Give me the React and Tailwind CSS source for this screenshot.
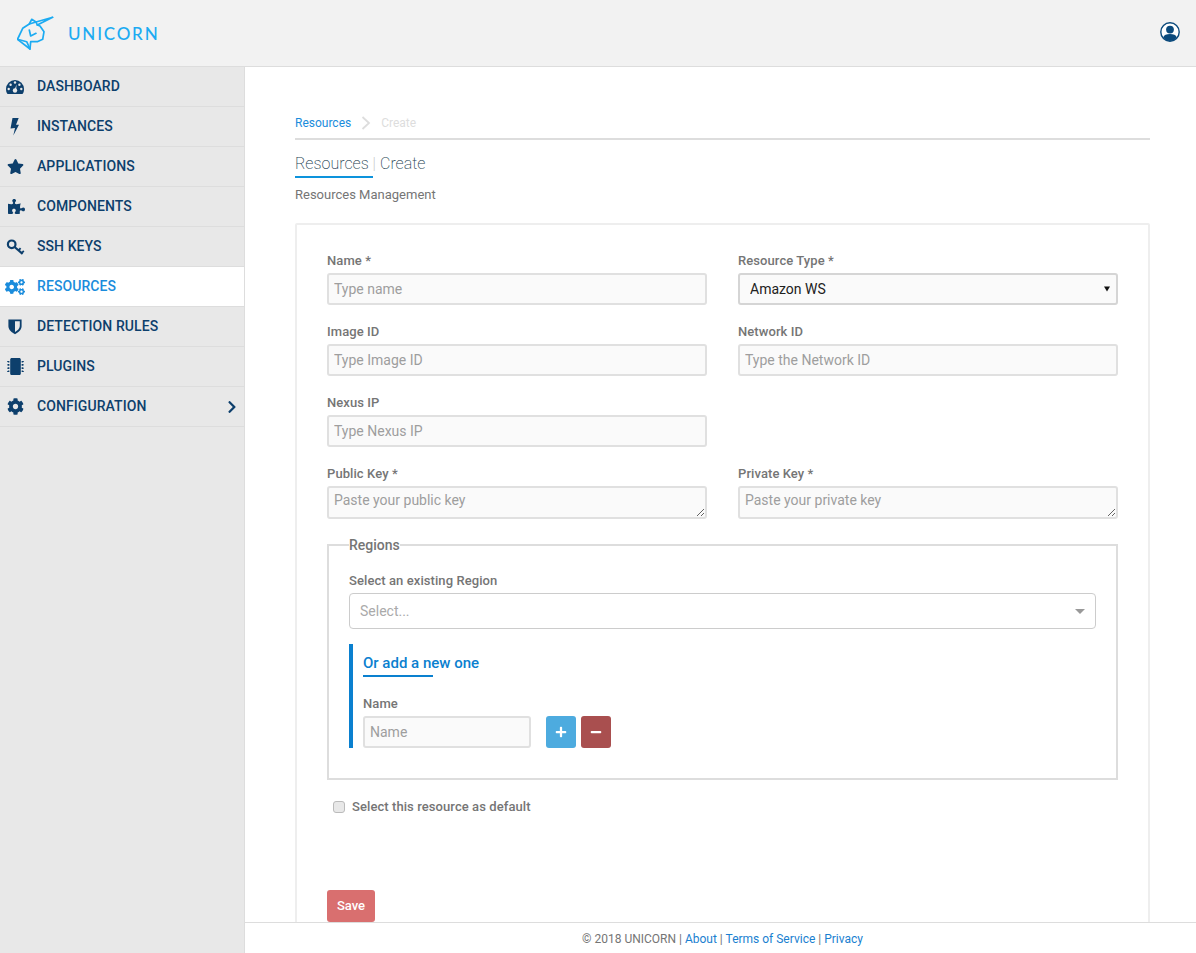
import React from "react";
import { FaStar, FaPuzzlePiece, FaCogs, FaMicrochip, FaCog, FaChevronRight, FaPlus, FaMinus } from "react-icons/fa";

const IconBox = ({ children }) => (
  <svg width="20" height="20" viewBox="0 0 20 20" fill="currentColor">{children}</svg>
);

const Dash = () => (
  <IconBox>
    <path d="M1 12 A9 9 0 0 1 19 12 C19 14 18.5 16 17.5 17 H2.5 C1.5 16 1 14 1 12Z" />
    <g fill="#e8e8e8">
      <circle cx="3.7" cy="12" r="1.2" />
      <circle cx="5.6" cy="7.8" r="1.2" />
      <circle cx="10" cy="5.5" r="1.2" />
      <circle cx="14.4" cy="7.8" r="1.2" />
      <circle cx="16.3" cy="12" r="1.2" />
      <circle cx="10" cy="13.5" r="2.2" />
    </g>
    <path d="M9.4 13 L11.6 7.6 L11 13.8Z" fill="#e8e8e8" />
  </IconBox>
);
const Bolt = () => (
  <IconBox><path d="M7.5 1 H13.7 L11 7.8 H14 L8.3 18.5 L10 11 L5.5 11.6Z" /></IconBox>
);
const Key = () => (
  <IconBox>
    <g fill="none" stroke="currentColor" strokeWidth="2.2">
      <circle cx="6.7" cy="7.3" r="3.8" />
      <path d="M9.6 10 L17.6 16.8" />
      <path d="M13.6 13.4 L15.6 11.2 M16.8 16 L18.8 13.8" strokeWidth="1.8" />
    </g>
  </IconBox>
);
const Shield = () => (
  <IconBox>
    <path d="M3.4 2.4 H16.6 V9 C16.6 13 13 15.6 10 17.2 C7 15.6 3.4 13 3.4 9Z" />
    <path d="M10 4.3 H14.8 V9 C14.8 11.6 12.5 13.6 10 15Z" fill="#e8e8e8" />
  </IconBox>
);
const wrap = (Icon, size, cls = "") => () => <Icon size={size} className={cls} />;

const nav = [
  ["DASHBOARD", Dash],
  ["INSTANCES", Bolt],
  ["APPLICATIONS", wrap(FaStar, 17)],
  ["COMPONENTS", wrap(FaPuzzlePiece, 17, "translate-x-px")],
  ["SSH KEYS", Key],
  ["RESOURCES", wrap(FaCogs, 20), true],
  ["DETECTION RULES", Shield],
  ["PLUGINS", wrap(FaMicrochip, 17)],
  ["CONFIGURATION", wrap(FaCog, 17)],
];

function Logo() {
  return (
    <svg width="38" height="34" viewBox="0 0 38 34" fill="none" stroke="#1cabf2" strokeWidth="1.7" strokeLinejoin="round" strokeLinecap="round" className="ml-[17px] mt-[16px] shrink-0">
      <path d="M35.7 1.3 L19 6 L14.7 3.3 L12.3 8 L5.7 12.3 L0.5 23.3 L13 33 L13.7 25.7 L20.3 25.7 L25.7 23.3 L27 15.7 L23 10 L20.3 9 L35.7 1.3Z" />
      <path d="M0.5 23.3 L9.7 25.7 L13 33" />
      <path d="M12.3 14 L13.7 20 L19 17.3" />
      <path d="M19 6 L20.3 9 M12.3 8 L19 6" />
    </svg>
  );
}

const labelCls = "text-[13px] font-medium leading-[18px] tracking-[0.08px] text-[#757575]";
const inputCls = "w-full rounded-[3px] border-2 border-[#e0e0e0] bg-[#fafafa] px-[5px] text-[14px] outline-none placeholder:text-[#9e9e9e]";

function Field({ label, placeholder }) {
  return (
    <div className="flex flex-col">
      <label className={`${labelCls} mb-[3px]`}>{label}</label>
      <input placeholder={placeholder} className={`h-[32px] ${inputCls}`} />
    </div>
  );
}

function Area({ label, placeholder }) {
  return (
    <div className="flex flex-col">
      <label className={`${labelCls} mb-[3px]`}>{label}</label>
      <textarea placeholder={placeholder} className={`block h-[33px] py-[3px] leading-[18px] ${inputCls}`} />
    </div>
  );
}

export default function App() {
  return (
    <div className="h-[953px] w-[1196px] overflow-hidden bg-white flex flex-col font-['Roboto',sans-serif]">
      <header className="h-[67px] shrink-0 bg-[#f2f2f2] border-b border-[#dddddd] flex items-start">
        <Logo />
        <span className="ml-[13px] mt-[24px] text-[17px] font-medium leading-[20px] tracking-[1.8px] text-[#1cabf2] font-['Lato',sans-serif]">UNICORN</span>
        <svg width="20" height="20" viewBox="0 0 20 20" className="ml-auto mr-[16px] mt-[22px]">
          <circle cx="10" cy="10" r="9.2" fill="#fff" stroke="#0b4a7c" strokeWidth="1.4" />
          <circle cx="10" cy="7.6" r="3.9" fill="#0b4a7c" />
          <path d="M3.2 15.6 C4 12.8 6.5 12 10 12 C13.5 12 16 12.8 16.8 15.6 C15 18 12.5 19 10 19 C7.5 19 5 18 3.2 15.6Z" fill="#0b4a7c" />
        </svg>
      </header>
      <div className="flex flex-1 min-h-0">
        <aside className="w-[245px] shrink-0 bg-[#e8e8e8] border-r border-[#dddddd]">
          {nav.map(([name, Icon, active]) => (
            <div key={name} className={`relative h-[40px] flex items-center border-b border-[#dddddd] ${active ? "bg-white text-[#1a8cdc]" : "text-[#0d3f6c]"}`}>
              <span className="w-[30px] flex justify-center shrink-0"><Icon /></span>
              <span className="ml-[7px] text-[14px] font-medium tracking-[0.08px]">{name}</span>
              {name === "CONFIGURATION" && <FaChevronRight size={14} className="absolute right-[5px]" />}
            </div>
          ))}
        </aside>
        <div className="flex-1 flex flex-col min-w-0">
          <main className="flex-1 min-h-0 overflow-hidden pl-[50px] pr-[46px] pt-[48px]">
            <nav className="h-[25px] flex items-start border-b-2 border-[#dddddd] pt-[1px] text-[12px] leading-[14px]">
              <span className="text-[#1a8cdc]">Resources</span>
              <svg width="10" height="14" viewBox="0 0 10 14" fill="none" stroke="#dddddd" strokeWidth="1.8" className="ml-[10px]"><path d="M1.5 1 L8 7 L1.5 13" /></svg>
              <span className="ml-[10px] text-[#dddddd]">Create</span>
            </nav>
            <h1 className="mt-[12px] h-[26px] text-[16px] font-extralight leading-[24px] flex text-[#263f52]">
              <span className="border-b-2 border-[#0d93dc] h-[26px] w-[78px] shrink-0 whitespace-pre">Resources <span className="text-[#bbbbbb]">|</span></span>
              <span className="ml-[7px]">Create</span>
            </h1>
            <p className="mt-[8px] text-[13px] leading-[18px] text-[#757575]">Resources Management</p>
            <section className="mt-[19px] h-[800px] border-2 border-[#eeeeee] rounded-[2px] px-[30px] pt-[27px]">
              <div className="grid grid-cols-2 gap-x-[31px] gap-y-[18px]">
                <Field label="Name *" placeholder="Type name" />
                <div className="flex flex-col">
                  <label className={`${labelCls} mb-[3px]`}>Resource Type *</label>
                  <div className="relative">
                    <select defaultValue="Amazon WS" className="appearance-none block h-[32px] w-full rounded-[3px] border-2 border-[#d5d5d5] bg-[#fafafa] pl-[10px] text-[14px] text-[#212121] outline-none">
                      <option>Amazon WS</option>
                    </select>
                    <svg width="6" height="6" viewBox="0 0 6 6" className="absolute right-[8px] top-[13px]"><path d="M0 0.5 H6 L3 5.5Z" fill="#111111" /></svg>
                  </div>
                </div>
                <Field label="Image ID" placeholder="Type Image ID" />
                <Field label="Network ID" placeholder="Type the Network ID" />
                <Field label="Nexus IP" placeholder="Type Nexus IP" />
                <div />
                <Area label="Public Key *" placeholder="Paste your public key" />
                <Area label="Private Key *" placeholder="Paste your private key" />
              </div>
              <fieldset className="mt-[17px] h-[244px] border-2 border-[#dddddd] px-[20px]">
                <legend className="text-[14px] font-medium leading-[18px] text-[#757575]">Regions</legend>
                <label className={`block mt-[18px] ${labelCls}`}>Select an existing Region</label>
                <div className="mt-[3px] h-[36px] rounded-[4px] border border-[#cccccc] flex items-center justify-between pl-[10px] pr-[10px]">
                  <span className="text-[14px] leading-[18px] -mt-[1px] text-[#aaaaaa]">Select...</span>
                  <svg width="10" height="5" viewBox="0 0 10 5"><path d="M0 0 H10 L5 5Z" fill="#999999" /></svg>
                </div>
                <div className="mt-[15px] h-[104px] border-l-4 border-[#0a80cf] pl-[10px]">
                  <div className="pt-[10px] text-[15px] font-medium leading-[18px] text-[#0a80cf]">Or add a new one</div>
                  <div className="w-[70px] h-[2px] mt-[3px] bg-[#0a80cf]" />
                  <label className={`block mt-[18px] ${labelCls}`}>Name</label>
                  <div className="mt-[3px] flex">
                    <input placeholder="Name" className={`h-[32px] !w-[168px] ${inputCls}`} />
                    <button className="ml-[15px] h-[32px] w-[30px] rounded-[3px] bg-[#4dabdf] text-white flex items-center justify-center"><FaPlus size={12} /></button>
                    <button className="ml-[5px] h-[32px] w-[30px] rounded-[3px] bg-[#a94f4f] text-white flex items-center justify-center"><FaMinus size={12} /></button>
                  </div>
                </div>
              </fieldset>
              <label className="mt-[18px] ml-[6px] flex items-center">
                <span className="w-[12px] h-[12px] rounded-[3px] border border-[#bbbbbb] bg-[#e8e8e8]" />
                <span className={`ml-[7px] ${labelCls}`}>Select this resource as default</span>
              </label>
              <button className="mt-[74px] block h-[32px] w-[48px] rounded-[3px] bg-[#d96f6f] text-[13px] font-medium text-white">Save</button>
            </section>
          </main>
          <footer className="h-[31px] shrink-0 border-t border-[#dddddd] bg-white flex items-center justify-center pt-[1px] pl-[4px] text-[12px] text-[#757575]">
            <span>© 2018 UNICORN | <span className="text-[#1a7fd0]">About</span> | <span className="text-[#1a7fd0]">Terms of Service</span> | <span className="text-[#1a7fd0]">Privacy</span></span>
          </footer>
        </div>
      </div>
    </div>
  );
}
